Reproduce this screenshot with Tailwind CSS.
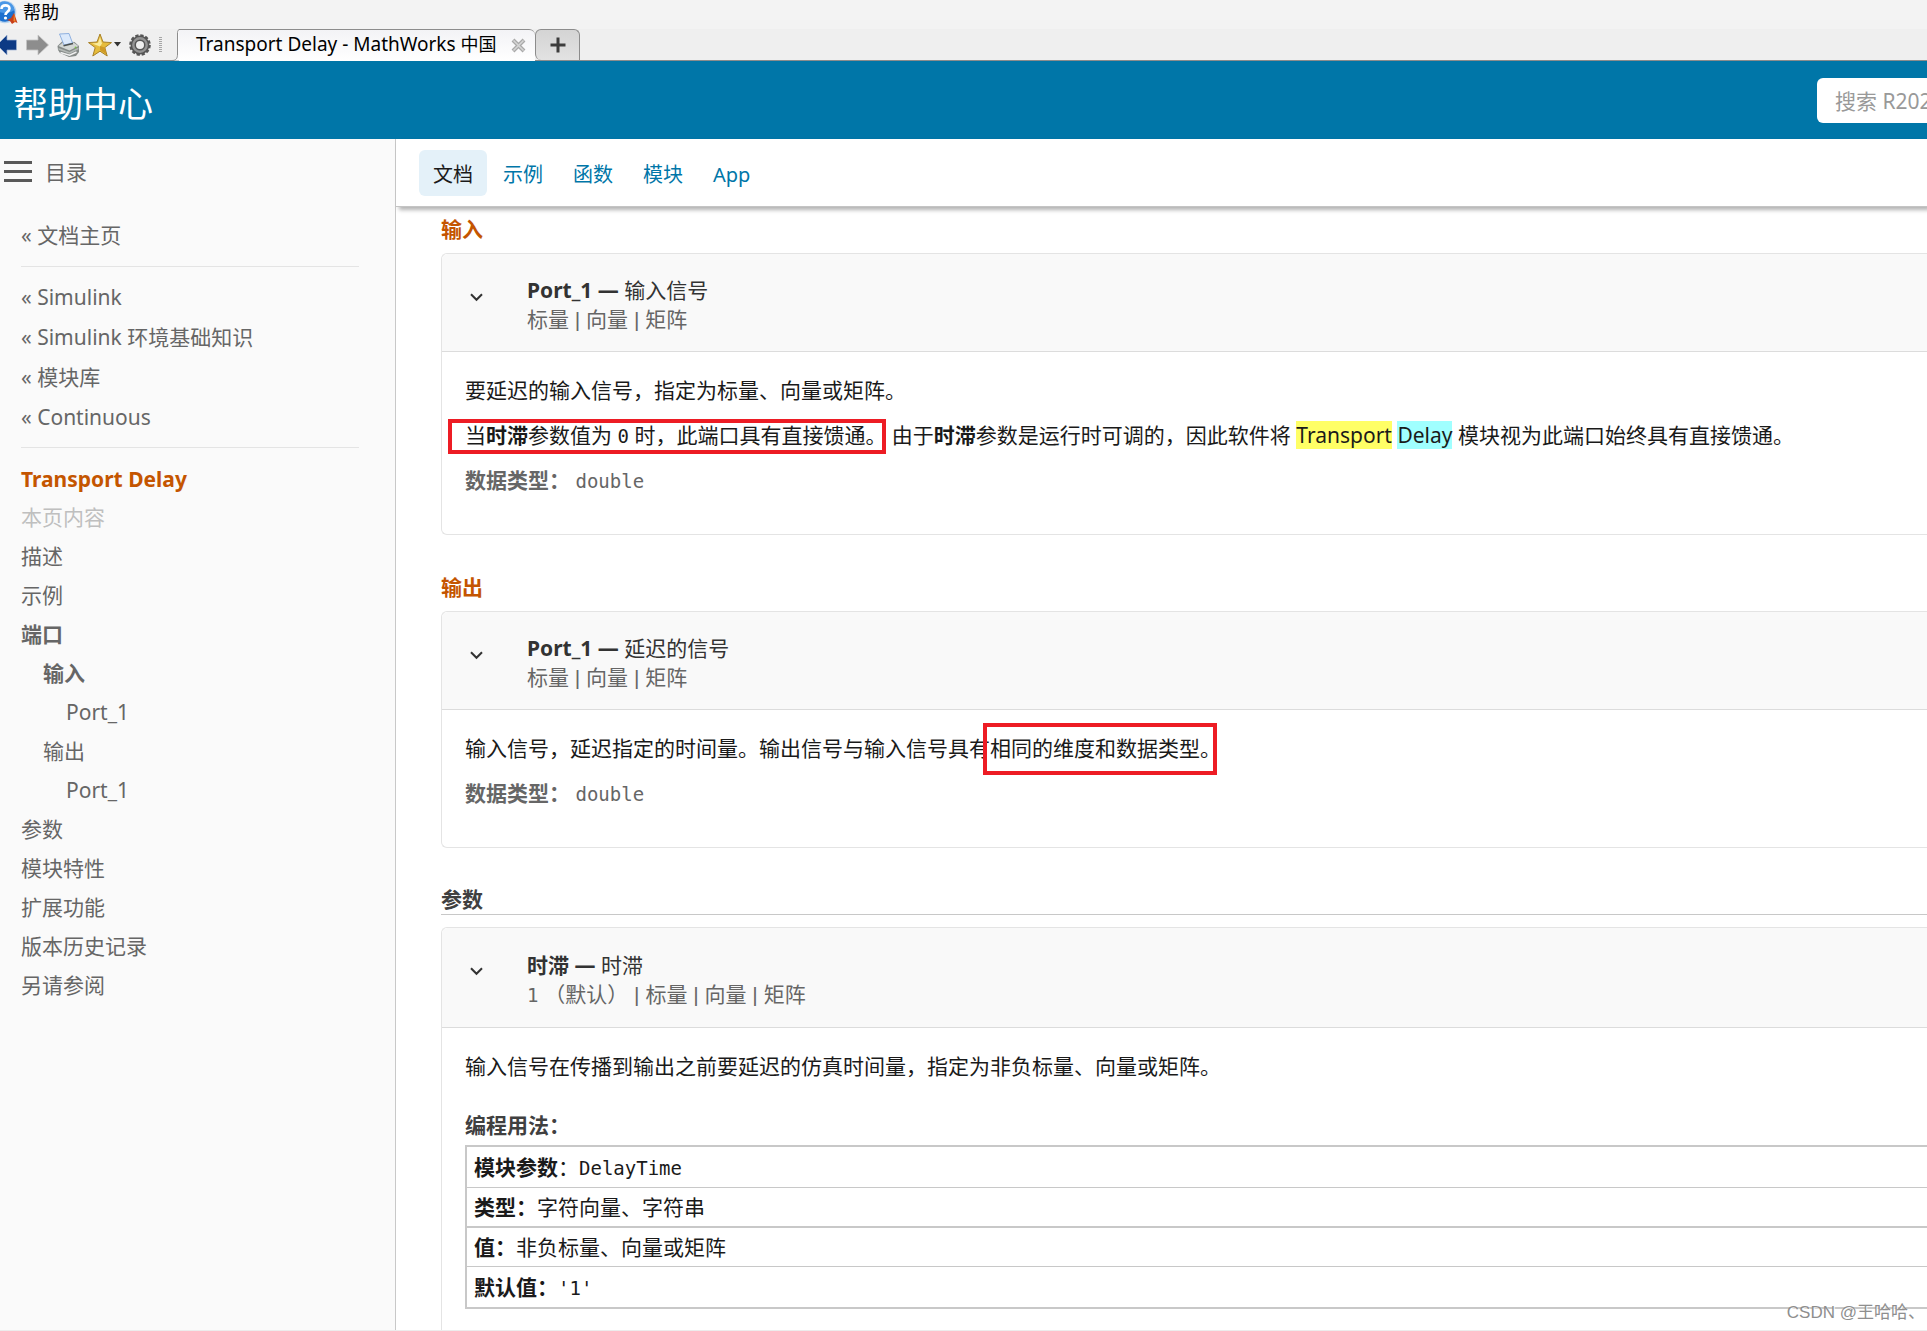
<!DOCTYPE html>
<html lang="zh-CN">
<head>
<meta charset="utf-8">
<title>Transport Delay - MathWorks 中国</title>
<script src="https://cdn.jsdelivr.net/npm/@tailwindcss/browser@4"></script>
</head>
<body class="relative flex h-screen flex-col overflow-hidden bg-white font-['Noto_Sans','Noto_Sans_CJK_SC',sans-serif] text-[21px] leading-[30px] text-[#1a1a1a]">

<!-- Window title -->
<div class="flex h-[29px] shrink-0 items-start bg-[#f3f3f3]">
  <svg class="h-6 w-[18px]" viewBox="0 0 18 24" aria-hidden="true">
    <circle cx="5" cy="12" r="11.300" fill="#b9d4ee"/>
    <circle cx="5" cy="12" r="9.800" fill="#1c70cf"/>
    <path d="M-5 10a9.800 9.800 0 0 1 19.500 0c-5 4-14 4-19.500 0z" fill="#4a97e6"/>
    <path d="M1.500 9c0-4.800 8-4.700 8-.4 0 3.200-4 3.200-4 6.400" fill="none" stroke="#fff" stroke-width="2.600"/>
    <circle cx="5.500" cy="18" r="1.600" fill="#fff"/>
    <path d="M7 20l4-2 3-5 3.500 10-2.500-1-3 2-2-3z" fill="#c8401a"/>
    <path d="M14 13l1.500 9-2-1z" fill="#f08a2a"/>
  </svg>
  <span class="ml-[5px] text-lg leading-6 text-black">帮助</span>
</div>

<!-- Toolbar and page tabs -->
<div class="flex h-8 shrink-0 items-stretch border-b border-[#8c8c8c] bg-[#efefef]">
  <div class="flex items-center">
    <button aria-label="后退" class="mr-[9px]"><svg class="h-[22px] w-[17px]" viewBox="0 0 17 22"><path d="M-3 11L7 1v5h9.500v10H7v5z" fill="#0d3a85" stroke="#9fb3d3" stroke-width=".7"/></svg></button>
    <button aria-label="前进" class="mr-2"><svg class="h-[22px] w-[23px]" viewBox="0 0 23 22"><path d="M22.500 11L12 1v5H.5v10H12v5z" fill="#8d8d8d" stroke="#c4c4c4" stroke-width=".8"/></svg></button>
    <button aria-label="打印" class="mr-2"><svg class="h-6 w-[23px]" viewBox="0 0 23 24">
      <path d="M.5 13l5-5 12 1 4.500 4v6l-3 4-7 1-9-4-2-3z" fill="#858a88"/>
      <path d="M1.500 13l5-4 10 .5 5 3.500-9 4.500z" fill="#d3d7d5"/>
      <path d="M2.500 1l9.500-.5 3.500 9.500-8.500 2z" fill="#dbe9fb" stroke="#86a9dd" stroke-width=".9"/>
      <path d="M6.500 12.700l9.500-2.200" stroke="#4c514f" stroke-width="1.600"/>
      <path d="M1.500 15l11 4 9-4.500v1.700l-9 4.600-11-4z" fill="#b4b9b6"/>
      <path d="M3.500 19.500l9 2.700 7-3.200" fill="none" stroke="#f0f0f0" stroke-width="1.500"/>
      <circle cx="18.500" cy="14.500" r=".9" fill="#7cc04a"/>
    </svg></button>
    <button aria-label="收藏夹" class="mr-2 flex items-center"><svg class="h-6 w-[24px]" viewBox="0 0 24 24">
      <path d="M12 1l3 8 8.500.6-6.700 5 2.400 8.400-7.200-4.800L4.800 23l2.400-8.400L.5 9.600 9 9z" fill="#e6bc3c" stroke="#a98229" stroke-width="1"/>
      <path d="M12 4l2 6.500-2 3-8-3 6-.4z" fill="#faeb9c"/><path d="M12 13l5 1.500 1 6.500-6-4z" fill="#d09a26"/>
    </svg><svg class="ml-0.5 h-[5px] w-[7px]" viewBox="0 0 7 5"><path d="M0 0h7L3.500 4.500z" fill="#333"/></svg></button>
    <button aria-label="设置" class="mr-2"><svg class="h-[22px] w-[22px]" viewBox="0 0 22 22">
      <circle cx="11" cy="11" r="9.500" fill="none" stroke="#555" stroke-width="2.600" stroke-dasharray="3.200 1.774"/>
      <circle cx="11" cy="11" r="6.700" fill="none" stroke="#555" stroke-width="5.400"/>
      <circle cx="11" cy="11" r="6.700" fill="none" stroke="#949494" stroke-width="2.400"/>
    </svg></button>
    <svg class="h-4 w-[3px]" viewBox="0 0 3 16" aria-hidden="true"><path d="M1.500 0v16" stroke="#a6a6a6" stroke-width="3" stroke-dasharray="1 1"/></svg>
  </div>
  <svg class="ml-[10px] h-8 w-[7px] shrink-0" viewBox="0 0 7 32" aria-hidden="true"><path d="M7 .5C5.500 1.500 5.500 3 5.500 5v20c0 4-1 6.500-5.500 6.500h7z" fill="#fbfbfc"/><path d="M7 .5C5.500 1.500 5.500 3 5.500 5v20c0 4-1 6.500-5.500 6.500" fill="none" stroke="#8c8c8c"/></svg>
  <div class="-mb-px flex h-8 w-[356px] items-center rounded-tr-md border-t border-[#8c8c8c] bg-linear-to-b from-[#f3f3f6] to-white pl-[17px] leading-6 text-black">
    <span class="pb-1 text-[19px] whitespace-nowrap">Transport Delay - MathWorks <span class="text-lg leading-none">中国</span></span>
    <button aria-label="关闭标签页" class="mr-[9px] ml-auto flex"><svg class="h-[15px] w-[15px]" viewBox="0 0 15 15"><path d="M2 2l11 11M13 2L2 13" stroke="#a9a9a9" stroke-width="4"/><path d="M2.500 2.500l10 10M12.500 2.500l-10 10" stroke="#d6d6d6" stroke-width="1.500"/></svg></button>
  </div>
  <button aria-label="新建标签页" class="flex w-[45px] items-center justify-center rounded-t-md rounded-bl-md border border-b-0 border-[#8c8c8c] bg-linear-to-b from-[#d4d4d4] to-[#e2e2e2]"><svg class="h-4 w-4" viewBox="0 0 16 16"><path d="M8 .5v15M.5 8h15" stroke="#3c3c3c" stroke-width="3"/></svg></button>
</div>

<!-- Help center header -->
<header class="flex h-[78px] shrink-0 items-center overflow-hidden bg-[#0076a8]">
  <h1 class="ml-[13px] pt-2 text-[35px] leading-[44px] text-white">帮助中心</h1>
  <input type="search" aria-label="搜索帮助中心" placeholder="搜索 R2023a 文档" class="-mr-[240px] ml-auto h-[45px] w-[350px] shrink-0 rounded-md bg-white pt-0.5 pl-[18px] text-[21px] placeholder:text-[#999]">
</header>

<div class="flex min-h-0 grow">
  <!-- Contents sidebar -->
  <aside class="w-[396px] shrink-0 border-r border-[#c8c8c8] bg-[#fafafa] text-[#666]">
    <button class="mt-[18px] ml-1 flex items-center gap-[13px]">
      <svg class="h-[22px] w-7" viewBox="0 0 28 22" aria-hidden="true"><path d="M0 1.500h28M0 10.500h28M0 19.500h28" stroke="#595959" stroke-width="3"/></svg>
      <span>目录</span>
    </button>
    <nav aria-label="目录" class="mr-9 ml-[21px]">
      <div class="mt-[29px] border-b border-[#e4e4e4] pt-1 pb-4"><a href="#" class="block">« 文档主页</a></div>
      <ul class="flex flex-col gap-[10px] border-b border-[#e4e4e4] py-[15px]">
        <li><a href="#">« Simulink</a></li>
        <li><a href="#">« Simulink 环境基础知识</a></li>
        <li><a href="#">« 模块库</a></li>
        <li><a href="#">« Continuous</a></li>
      </ul>
      <a href="#" class="mt-4 block font-bold text-[#c45500]">Transport Delay</a>
      <ul class="mt-2 flex flex-col gap-[9px]">
        <li class="text-[#bfbfbf]">本页内容</li>
        <li><a href="#">描述</a></li>
        <li><a href="#">示例</a></li>
        <li class="font-bold"><a href="#">端口</a></li>
        <li class="pl-[22px] font-bold"><a href="#">输入</a></li>
        <li class="pl-[45px]"><a href="#">Port_1</a></li>
        <li class="pl-[22px]"><a href="#">输出</a></li>
        <li class="pl-[45px]"><a href="#">Port_1</a></li>
        <li><a href="#">参数</a></li>
        <li><a href="#">模块特性</a></li>
        <li><a href="#">扩展功能</a></li>
        <li><a href="#">版本历史记录</a></li>
        <li><a href="#">另请参阅</a></li>
      </ul>
    </nav>
  </aside>

  <main class="flex min-w-0 grow flex-col">
    <nav aria-label="内容类型" class="z-10 flex h-[68px] shrink-0 gap-0.5 border-b border-[#c4c4c4] pt-[11px] pl-[23px] text-xl leading-[42px] text-[#0076a8] shadow-[3px_3px_4px_rgba(0,0,0,0.3)]">
      <a href="#" class="h-[46px] rounded-md bg-[#e4f1f9] px-[14px] pt-1 text-[#1a1a1a]">文档</a>
      <a href="#" class="px-[14px] pt-1">示例</a>
      <a href="#" class="px-[14px] pt-1">函数</a>
      <a href="#" class="px-[14px] pt-1">模块</a>
      <a href="#" class="px-[14px] pt-1">App</a>
    </nav>

    <div class="grow pl-[45px]">
      <h3 class="mt-2 text-[21px] leading-7 font-bold text-[#c45500]">输入</h3>
      <section class="mt-[10px] rounded-l-md border border-r-0 border-[#e4e4e4]">
        <div class="flex rounded-tl-md border-b border-[#dcdcdc] bg-[#f9f9f9] pt-[22px] pb-[17px]">
          <button aria-label="折叠 Port_1" class="mt-[17px] ml-7 h-[9px] w-[13px]"><svg class="h-[9px] w-[13px]" viewBox="0 0 13 9"><path d="M1 1.200l5.500 5.600L12 1.200" fill="none" stroke="#333" stroke-width="2"/></svg></button>
          <div class="ml-11 leading-[29px]">
            <p class="text-[#333]"><b>Port_1 —</b> 输入信号</p>
            <p class="font-['Liberation_Sans','Noto_Sans_CJK_SC',sans-serif] text-[#666]">标量 | 向量 | 矩阵</p>
          </div>
        </div>
        <div class="flex flex-col gap-[15px] pt-[23px] pb-[39px] pl-[23px]">
          <p>要延迟的输入信号，指定为标量、向量或矩阵。</p>
          <p class="whitespace-nowrap"><span class="relative">当<b>时滞</b>参数值为 <code class="font-['DejaVu_Sans_Mono',monospace] text-[19px] leading-none">0</code> 时，此端口具有直接馈通。<span class="absolute -top-0.5 right-0 -bottom-[5px] -left-[17px] border-4 border-[#ed1c24]"></span></span> 由于<b>时滞</b>参数是运行时可调的，因此软件将 <mark class="bg-[#ffff66] text-inherit">Transport</mark> <mark class="bg-[#a0ffff] text-inherit">Delay</mark> 模块视为此端口始终具有直接馈通。</p>
          <p class="text-[#666]"><b>数据类型：</b> <code class="font-['DejaVu_Sans_Mono',monospace] text-[19px] leading-none">double</code></p>
        </div>
      </section>

      <h3 class="mt-[38px] text-[21px] leading-7 font-bold text-[#c45500]">输出</h3>
      <section class="mt-[10px] rounded-l-md border border-r-0 border-[#e4e4e4]">
        <div class="flex rounded-tl-md border-b border-[#dcdcdc] bg-[#f9f9f9] pt-[22px] pb-[17px]">
          <button aria-label="折叠 Port_1" class="mt-[17px] ml-7 h-[9px] w-[13px]"><svg class="h-[9px] w-[13px]" viewBox="0 0 13 9"><path d="M1 1.200l5.500 5.600L12 1.200" fill="none" stroke="#333" stroke-width="2"/></svg></button>
          <div class="ml-11 leading-[29px]">
            <p class="text-[#333]"><b>Port_1 —</b> 延迟的信号</p>
            <p class="font-['Liberation_Sans','Noto_Sans_CJK_SC',sans-serif] text-[#666]">标量 | 向量 | 矩阵</p>
          </div>
        </div>
        <div class="flex flex-col gap-[15px] pt-[23px] pb-[39px] pl-[23px]">
          <p class="whitespace-nowrap">输入信号，延迟指定的时间量。输出信号与输入信号具有<span class="relative">相同的维度和数据类型。<span class="absolute -top-[11px] right-1 -bottom-[13px] -left-[7px] border-4 border-[#ed1c24]"></span></span></p>
          <p class="text-[#666]"><b>数据类型：</b> <code class="font-['DejaVu_Sans_Mono',monospace] text-[19px] leading-none">double</code></p>
        </div>
      </section>

      <h2 class="mt-[37px] border-b border-[#c8c8c8] pb-px text-[21px] leading-7 font-bold text-[#404040]">参数</h2>
      <section class="mt-3 rounded-tl-md border border-r-0 border-b-0 border-[#e4e4e4]">
        <div class="flex rounded-tl-md border-b border-[#dcdcdc] bg-[#f9f9f9] pt-[23px] pb-[18px]">
          <button aria-label="折叠 时滞" class="mt-4 ml-7 h-[9px] w-[13px]"><svg class="h-[9px] w-[13px]" viewBox="0 0 13 9"><path d="M1 1.200l5.500 5.600L12 1.200" fill="none" stroke="#333" stroke-width="2"/></svg></button>
          <div class="ml-11 leading-[29px]">
            <p class="text-[#333]"><b>时滞 —</b> 时滞</p>
            <p class="font-['Liberation_Sans','Noto_Sans_CJK_SC',sans-serif] text-[#666]"><code class="font-['DejaVu_Sans_Mono',monospace] text-[19px] leading-none">1</code> （默认） | 标量 | 向量 | 矩阵</p>
          </div>
        </div>
        <div class="pt-[23px] pb-12 pl-[23px]">
          <p>输入信号在传播到输出之前要延迟的仿真时间量，指定为非负标量、向量或矩阵。</p>
          <h4 class="mt-[29px] mb-[5px] font-bold text-[#404040]">编程用法：</h4>
          <table class="w-full border-separate border-spacing-0 border-2 border-r-0 border-[#c8c8c8]">
            <tbody>
              <tr><td class="h-[41px] border-b border-[#c8c8c8] p-0 pl-[7px]"><b>模块参数</b>：<code class="font-['DejaVu_Sans_Mono',monospace] text-[19px] leading-none">DelayTime</code></td></tr>
              <tr><td class="h-10 border-b-2 border-[#c8c8c8] p-0 pl-[7px]"><b>类型：</b>字符向量、字符串</td></tr>
              <tr><td class="h-[39px] border-b border-[#c8c8c8] p-0 pl-[7px]"><b>值：</b>非负标量、向量或矩阵</td></tr>
              <tr><td class="h-10 p-0 pl-[7px]"><b>默认值：</b><code class="font-['DejaVu_Sans_Mono',monospace] text-[19px] leading-none">'1'</code></td></tr>
            </tbody>
          </table>
        </div>
      </section>
    </div>
  </main>
</div>

<div class="absolute inset-x-0 bottom-0 h-px bg-[#ececec]"></div>
<div class="absolute right-0.5 bottom-1 z-20 font-['Liberation_Sans','Noto_Sans_CJK_SC',sans-serif] text-[17px] leading-7 text-[#8e8e8e] [text-shadow:1px_1px_0_#fff]">CSDN @王哈哈、</div>
</body>
</html>
